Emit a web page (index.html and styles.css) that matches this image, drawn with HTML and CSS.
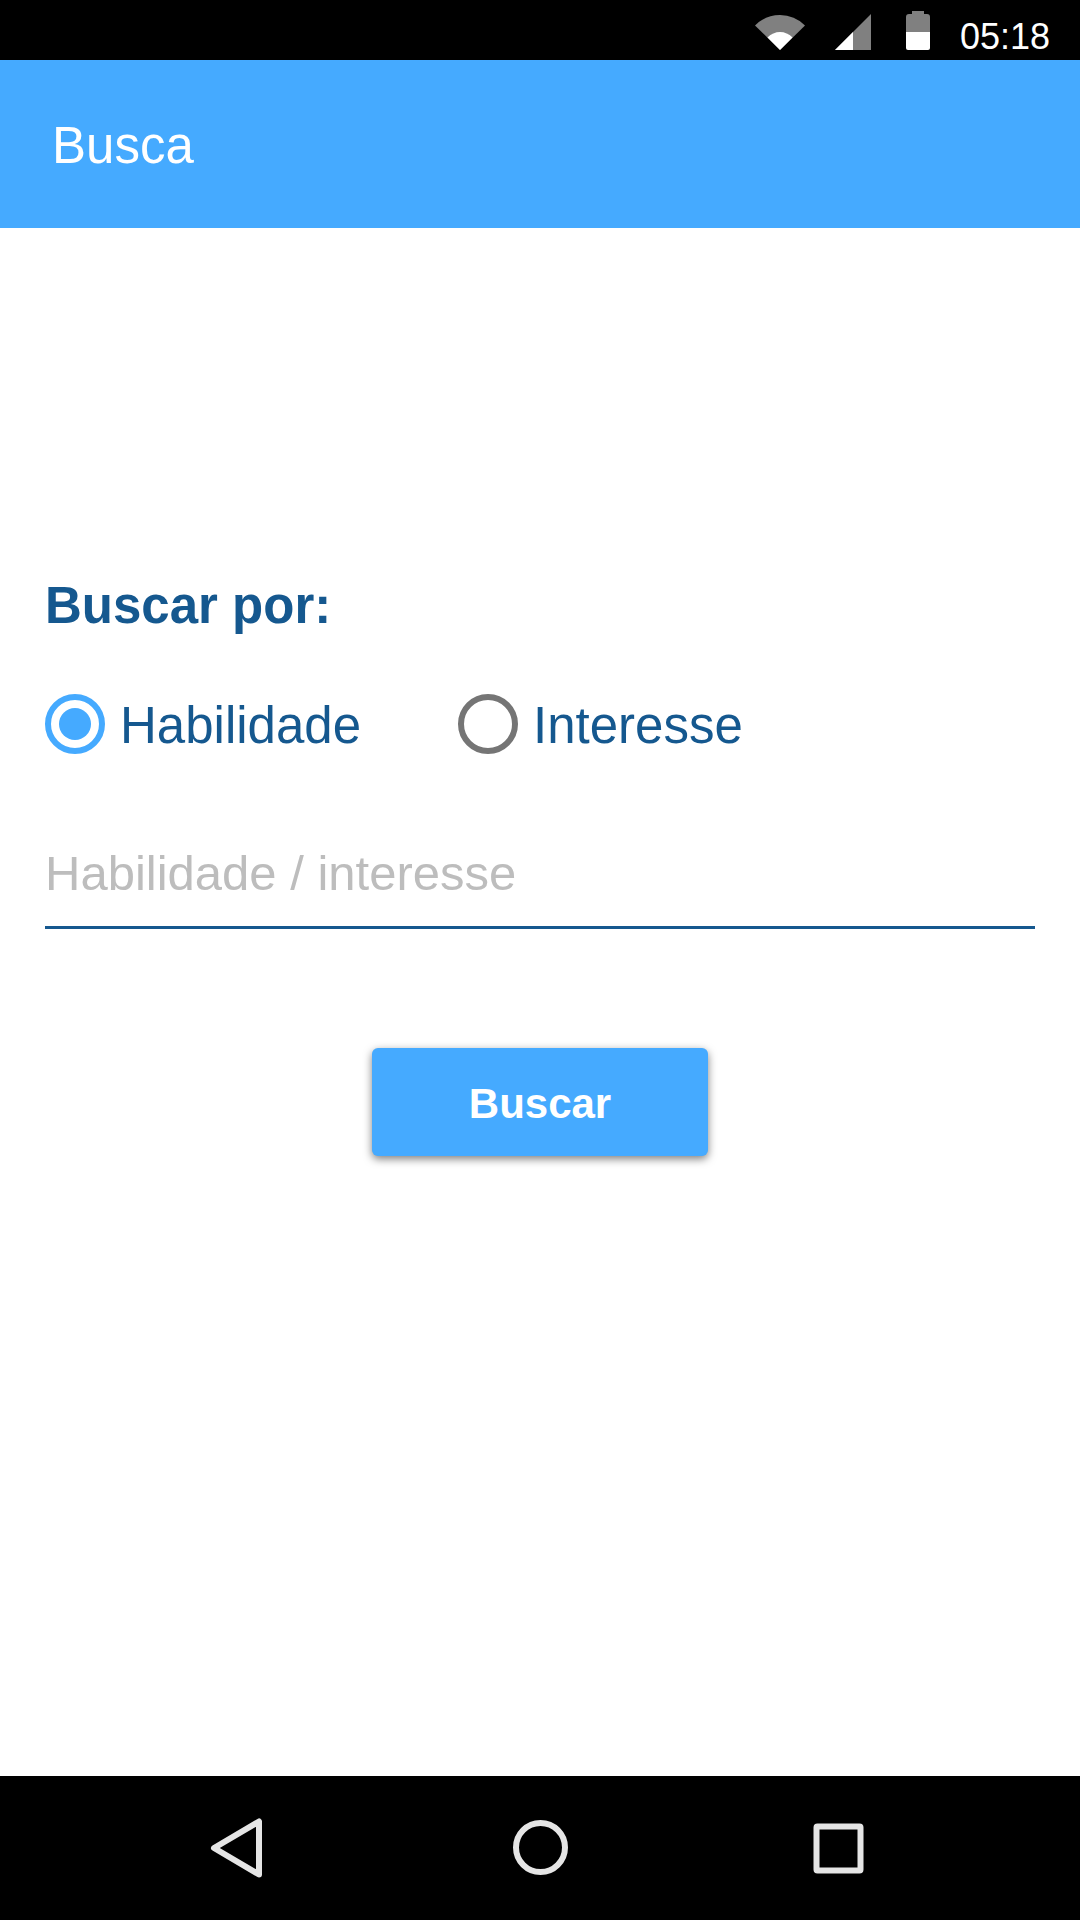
FILE: index.html
```html
<!DOCTYPE html>
<html lang="pt-BR">
<head>
  <meta charset="utf-8">
  <meta name="viewport" content="width=device-width, initial-scale=1">
  <title>Busca</title>
  <link rel="stylesheet" href="styles.css">
</head>
<body>
  <div class="status-bar">
    <svg width="50" height="39" viewBox="0 0 50 39" aria-hidden="true">
      <path fill="#808080" d="M25 39 0 14.500Q10.500 4 25 4T50 14.500Z"/>
      <path fill="#fff" d="M25 39 12.500 26.500Q18 21 25 21T37.500 26.500Z"/>
    </svg>
    <svg width="41" height="39" viewBox="0 0 41 39" aria-hidden="true">
      <path fill="#808080" d="M36 3V39H0Z"/>
      <path fill="#fff" d="M18 21V39H0Z"/>
    </svg>
    <svg width="24" height="39" viewBox="0 0 24 39" aria-hidden="true">
      <path fill="#808080" d="M6 0H18V3H21Q24 3 24 6V21H0V6Q0 3 3 3H6Z"/>
      <path fill="#fff" d="M0 21H24V37Q24 39 22 39H2Q0 39 0 37Z"/>
    </svg>
    <time class="clock">05:18</time>
  </div>

  <header class="app-bar">
    <h1 class="app-title">Busca</h1>
  </header>

  <main class="content">
    <form class="search-form">
      <fieldset class="search-type">
        <legend class="search-legend">Buscar por:</legend>
        <div class="options">
          <label class="option">
            <input class="radio" type="radio" name="tipo" value="habilidade" checked>
            <span>Habilidade</span>
          </label>
          <label class="option">
            <input class="radio" type="radio" name="tipo" value="interesse">
            <span>Interesse</span>
          </label>
        </div>
      </fieldset>
      <input class="search-input" type="text" name="termo" placeholder="Habilidade / interesse" aria-label="Habilidade / interesse">
      <button class="search-button" type="button">Buscar</button>
    </form>
  </main>

  <nav class="nav-bar" aria-label="Sistema">
    <button class="nav-button" type="button" aria-label="Voltar">
      <svg width="64" height="64" viewBox="0 0 64 64"><path d="M53 5.500V58.500L8 32Z"/></svg>
    </button>
    <button class="nav-button" type="button" aria-label="Início">
      <svg width="64" height="64" viewBox="0 0 64 64"><circle cx="32.500" cy="31.500" r="24.500"/></svg>
    </button>
    <button class="nav-button" type="button" aria-label="Recentes">
      <svg width="64" height="64" viewBox="0 0 64 64"><rect x="6.500" y="10.500" width="44" height="44" rx="1"/></svg>
    </button>
  </nav>
</body>
</html>
```

FILE: styles.css
```css
* {
  box-sizing: border-box;
}

body {
  display: flex;
  flex-direction: column;
  min-height: 100vh;
  margin: 0;
  background: #fff;
  color: #15588f;
  font-family: "Helvetica Neue", "Liberation Sans", Arial, sans-serif;
}

button,
input {
  font-family: inherit;
}

.status-bar {
  display: flex;
  align-items: flex-start;
  justify-content: flex-end;
  gap: 30px;
  height: 60px;
  padding: 11px 30px 0;
  background: #000;
}

.clock {
  color: #fff;
  font-size: 36px;
  line-height: 52px;
}

.app-bar {
  display: flex;
  align-items: center;
  height: 168px;
  padding: 4px 52px 0;
  background: #45aaff;
}

.app-title {
  margin: 0;
  color: #fff;
  font-size: 51px;
  font-weight: 400;
  line-height: 64px;
}

.content {
  flex: 1;
  padding: 348px 45px 60px;
}

.search-form {
  display: flex;
  flex-direction: column;
}

.search-type {
  min-width: 0;
  margin: 0;
  padding: 0;
  border: 0;
}

.search-legend {
  margin-bottom: 58px;
  padding: 0;
  font-size: 51px;
  font-weight: 700;
  line-height: 60px;
}

.options {
  display: flex;
  gap: 97px;
}

.option {
  display: flex;
  align-items: flex-start;
  gap: 15px;
  font-size: 51px;
  line-height: 64px;
}

.radio {
  appearance: none;
  width: 60px;
  height: 60px;
  margin: 0;
  border: 6px solid #757575;
  border-radius: 50%;
  background: #fff;
}

.radio:checked {
  padding: 8px;
  border-color: #45aaff;
}

.radio:checked::before {
  content: "";
  display: block;
  height: 100%;
  border-radius: 50%;
  background: #45aaff;
}

.search-input {
  width: 100%;
  height: 109px;
  margin: 62px 0 0;
  padding: 0;
  border: 0;
  border-bottom: 3px solid #15588f;
  outline: 0;
  background: transparent;
  color: #15588f;
  font-size: 49px;
}

.search-input::placeholder {
  color: #bdbdbd;
  opacity: 1;
}

.search-button {
  align-self: center;
  min-width: 336px;
  height: 108px;
  margin-top: 119px;
  padding: 4px 48px 0;
  border: 0;
  border-radius: 6px;
  background: #45aaff;
  box-shadow: 0 3px 9px rgba(0, 0, 0, 0.5);
  color: #fff;
  font-size: 42px;
  font-weight: 700;
}

.nav-bar {
  display: flex;
  justify-content: center;
  height: 144px;
  background: #000;
}

.nav-button {
  display: flex;
  align-items: center;
  justify-content: center;
  width: 28%;
  padding: 0;
  border: 0;
  background: transparent;
}

.nav-button svg {
  fill: none;
  stroke: #e5e5e5;
  stroke-width: 6px;
  stroke-linejoin: round;
}
```
